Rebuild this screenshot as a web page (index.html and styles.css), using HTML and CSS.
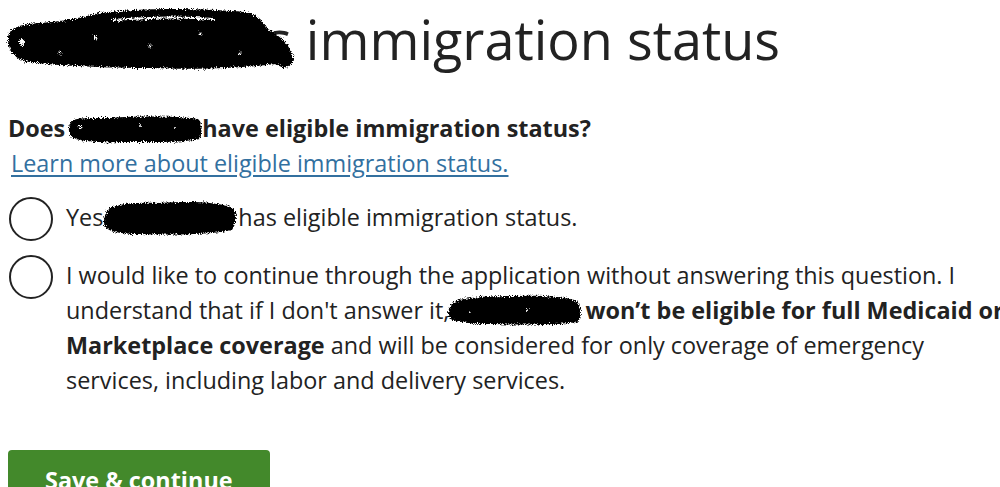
FILE: index.html
```html
<!DOCTYPE html>
<html lang="en">
<head>
    <meta charset="UTF-8">
    <meta name="viewport" content="width=device-width, initial-scale=1.0">
    <title>Immigration status</title>
    <link rel="stylesheet" href="styles.css">
</head>
<body>
    <svg class="defs" width="0" height="0" aria-hidden="true">
        <filter id="rough" x="-10%" y="-20%" width="120%" height="140%">
            <feTurbulence type="fractalNoise" baseFrequency="1.1" numOctaves="3" seed="3" result="noise"/>
            <feDisplacementMap in="SourceGraphic" in2="noise" scale="6" xChannelSelector="R" yChannelSelector="G"/>
        </filter>
    </svg>

    <main class="page">
        <h1 class="title"><svg class="redact redact-title" viewBox="4 8 292 68" aria-hidden="true">
                <g filter="url(#rough)">
                    <path d="M8,40 C8,30 20,26 40,25 C60,24 80,20 100,15 C140,10 200,10 245,14 C258,16 264,24 266,30 C278,36 292,48 293,60 C293,70 284,72 276,66 C240,70 200,72 150,70 C110,70 60,68 30,64 C14,62 8,52 8,40 Z"/>
                    <path d="M112,22 C150,19 190,19 214,21" class="fleck-line"/>
                    <circle cx="22" cy="44" r="3" class="fleck"/>
                    <circle cx="95" cy="40" r="2" class="fleck"/>
                    <circle cx="150" cy="48" r="1.5" class="fleck"/>
                    <circle cx="200" cy="36" r="1.5" class="fleck"/>
                    <circle cx="60" cy="55" r="1.5" class="fleck"/>
                    <circle cx="240" cy="55" r="1.5" class="fleck"/>
                </g>
            </svg>s immigration status</h1>

        <div class="question">
            <p class="prompt">Does<svg class="redact redact-q" viewBox="66 114 136 29" aria-hidden="true">
                    <g filter="url(#rough)">
                        <path d="M70,122 C72,116 90,117 110,117 C140,115 175,115 198,118 C203,122 202,130 200,138 C180,142 150,141 120,141 C100,142 85,140 75,138 C68,134 68,128 70,122 Z"/>
                        <circle cx="80" cy="126" r="1.5" class="fleck"/>
                        <circle cx="140" cy="124" r="1" class="fleck"/>
                        <circle cx="175" cy="127" r="1" class="fleck"/>
                    </g>
                </svg>have eligible immigration status?</p>
            <a class="learn" href="#">Learn more about eligible immigration status.</a>

            <label class="choice">
                <span class="radio"></span>
                <span class="choice-text">Yes<svg class="redact redact-yes" viewBox="103 198 135 36" aria-hidden="true">
                        <g filter="url(#rough)">
                            <path d="M106,212 C108,202 130,200 160,201 C190,199 220,200 233,206 C238,212 236,222 232,228 C210,233 170,233 140,232 C120,232 108,230 105,224 C103,220 104,216 106,212 Z"/>
                        </g>
                    </svg>has eligible immigration status.</span>
            </label>

            <label class="choice">
                <span class="radio"></span>
                <span class="choice-text">I would like to continue through the application without answering this question. I<br>understand that if I don't answer it,<svg class="redact redact-line" viewBox="445 294 143 32" preserveAspectRatio="none" aria-hidden="true">
                        <g filter="url(#rough)">
                            <path d="M450,306 C452,298 480,296 520,296 C550,295 575,297 584,302 C588,310 588,318 583,322 C560,325 520,325 490,324 C470,324 455,322 449,318 C446,314 447,310 450,306 Z"/>
                            <circle cx="470" cy="312" r="1" class="fleck"/>
                            <circle cx="530" cy="310" r="1" class="fleck"/>
                        </g>
                    </svg><strong>won’t be eligible for full Medicaid or<br>Marketplace coverage</strong> and will be considered for only coverage of emergency<br>services, including labor and delivery services.</span>
            </label>
        </div>

        <button class="save">Save &amp; continue</button>
    </main>
</body>
</html>
```

FILE: styles.css
```css
* {
    margin: 0;
    padding: 0;
    box-sizing: border-box;
}

html, body {
    overflow: hidden;
}

body {
    font-family: "Open Sans", "DejaVu Sans", sans-serif;
    color: #222;
    background: #fff;
}

.defs {
    position: absolute;
}

.page {
    padding: 0 8px;
}

.title {
    font-size: 54px;
    font-weight: 400;
    line-height: 64px;
    padding-top: 6px;
    white-space: nowrap;
}

.redact {
    display: inline-block;
    fill: #000;
}

.fleck {
    fill: #fff;
}

.fleck-line {
    fill: none;
    stroke: #fff;
    stroke-width: 2;
}

.redact-title {
    width: 292px;
    height: 68px;
    margin-left: -4px;
    margin-right: -30px;
    vertical-align: -14px;
    position: relative;
    z-index: 1;
}

.redact-q {
    width: 136px;
    height: 29px;
    margin-left: 1px;
    vertical-align: -7px;
}

.redact-yes {
    width: 135px;
    height: 36px;
    vertical-align: -10px;
}

.redact-line {
    width: 136px;
    height: 32px;
    margin-left: -3px;
    margin-right: 3px;
    vertical-align: -7px;
}

.question {
    margin-top: 37px;
    font-size: 23.4px;
    line-height: 35px;
}

.prompt {
    font-weight: 700;
}

.learn {
    display: block;
    margin-left: 3px;
    color: #33709f;
    text-decoration: underline;
    text-underline-offset: 3px;
}

.choice {
    display: flex;
    align-items: flex-start;
    gap: 13px;
    margin-top: 16px;
}

.choice + .choice {
    margin-top: 14px;
}

.radio {
    flex: none;
    width: 44px;
    height: 44px;
    margin-left: 1px;
    border: 2px solid #222;
    border-radius: 50%;
}

.choice-text {
    padding-top: 3px;
    white-space: nowrap;
}

.choice-text strong {
    font-weight: 700;
}

.save {
    display: block;
    margin-top: 52px;
    width: 262px;
    height: 60px;
    padding: 0 0 0 37px;
    text-align: left;
    background: #43892b;
    color: #fff;
    border: none;
    border-radius: 4px;
    font-family: "Open Sans", "DejaVu Sans", sans-serif;
    font-size: 23.4px;
    font-weight: 700;
}
```
